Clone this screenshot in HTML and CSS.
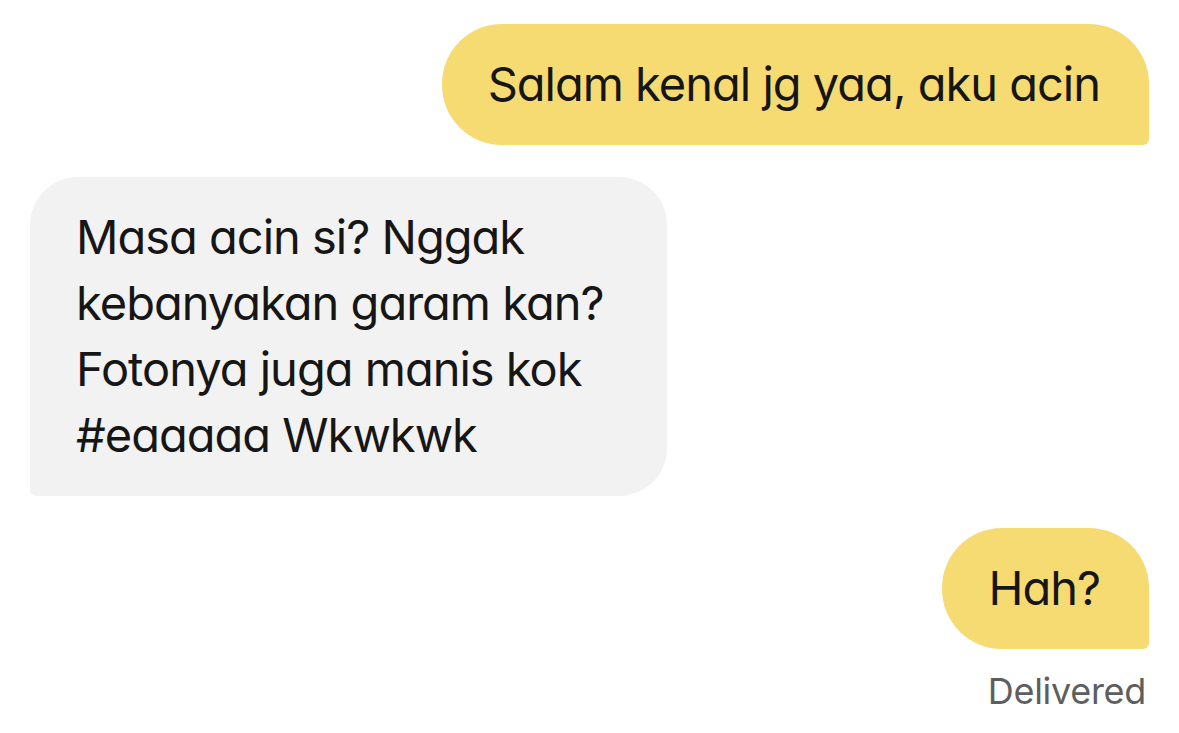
FILE: index.html
```html
<!DOCTYPE html>
<html lang="id">
<head>
<meta charset="utf-8">
<title>Chat</title>
<link rel="stylesheet" href="styles.css">
</head>
<body>
<main class="chat">
  <div class="msg msg-out">
    <div class="bubble bubble-out">Salam kenal jg yaa, aku acin</div>
  </div>
  <div class="msg msg-in">
    <div class="bubble bubble-in">Masa acin si? Nggak<br>kebanyakan garam kan?<br>Fotonya juga manis kok<br>#eaaaaa Wkwkwk</div>
  </div>
  <div class="msg msg-out">
    <div class="bubble bubble-out">Hah?</div>
    <div class="status">Delivered</div>
  </div>
</main>
</body>
</html>
```
FILE: styles.css
```css
html, body {
  margin: 0;
  padding: 0;
  background: #ffffff;
}
body {
  font-family: "Inter", "Noto Sans", sans-serif;
  font-feature-settings: "cv11" 1;
  color: #161616;
}
.chat {
  display: flex;
  flex-direction: column;
  gap: 32px;
  padding: 24px 30px 0 30px;
}
.msg {
  display: flex;
  flex-direction: column;
}
.msg-out {
  align-items: flex-end;
}
.msg-in {
  align-items: flex-start;
}
.bubble {
  font-size: 47px;
  line-height: 66px;
  letter-spacing: -1px;
  padding: 27px 49px 28px 46px;
}
.bubble-out {
  background: #f6da72;
  border-radius: 60px 60px 6px 60px;
}
.bubble-in {
  background: #f2f2f2;
  border-radius: 48px 48px 48px 6px;
  padding-right: 63px;
}
.status {
  margin-top: 22px;
  margin-right: 3px;
  font-size: 36px;
  line-height: 40px;
  color: #5e5e5e;
  letter-spacing: -0.3px;
}
```
